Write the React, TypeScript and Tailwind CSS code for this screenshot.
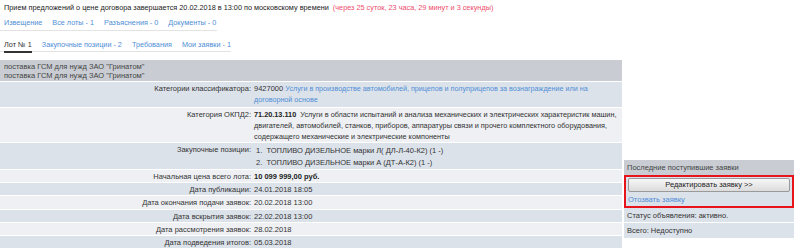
import React from "react";

function Row({ label, children, dark, cls = "" }: { label: string; children: React.ReactNode; dark?: boolean; cls?: string }) {
  return (
    <div className={`grid grid-cols-[252px_1fr] border-b border-white pt-[1px] ${dark ? "bg-[#dce2ea]" : "bg-[#eef0f3]"} ${cls}`}>
      <div className="text-right pr-[1px]">{label}</div>
      <div className="pl-[2px] pr-[2px]">{children}</div>
    </div>
  );
}

export default function App() {
  return (
    <div
      className="w-[800px] h-[249px] overflow-hidden bg-white text-[7.5px] leading-[11.25px] text-[#333]"
      style={{ fontFamily: '"Liberation Sans", Arial, sans-serif' }}
    >
      <div className="pl-[4px] pt-[2px] h-[15px] text-[7.3px] leading-[11px] text-[#222] whitespace-nowrap">
        Прием предложений о цене договора завершается 20.02.2018 в 13:00 по московскому времени{" "}
        <span className="text-[#ee4d6d] ml-[2px]">(через 25 суток, 23 часа, 29 минут и 3 секунды)</span>
      </div>

      <div className="flex w-[217px] gap-[10px] pl-[4px] h-[16px] items-center border-b border-[#e3e3e3] text-[7.25px] text-[#4f8ed6] whitespace-nowrap">
        <span>Извещение</span>
        <span>Все лоты - 1</span>
        <span>Разъяснения - 0</span>
        <span>Документы - 0</span>
      </div>

      <div className="flex w-[231px] gap-[10px] pl-[4px] mt-[6px] h-[15px] border-b border-[#e3e3e3] text-[7.25px] text-[#4f8ed6] whitespace-nowrap">
        <span className="text-[#333] border-b-2 border-[#333] h-[16px] pt-[2px]">Лот № 1</span>
        <span className="pt-[2px]">Закупочные позиции - 2</span>
        <span className="pt-[2px]">Требования</span>
        <span className="pt-[2px]">Мои заявки - 1</span>
      </div>

      <div className="flex mt-[8px] gap-[2px]">
        <div className="w-[622px] shrink-0">
          <div className="bg-[#c9cdd3] px-[4px] h-[22px] flex flex-col justify-center leading-[9px] border-b border-white text-[#444]">
            <div>поставка ГСМ для нужд ЗАО "Гринатом"</div>
            <div>поставка ГСМ для нужд ЗАО "Гринатом"</div>
          </div>
          <Row label="Категории классификатора:" dark cls="pb-[1px]">
            9427000{" "}
            <span className="text-[#4f8ed6] text-[7.2px]">
              Услуги в производстве автомобилей, прицепов и полуприцепов за вознаграждение или на договорной основе
            </span>
          </Row>
          <Row label="Категория ОКПД2:">
            <div className="text-[7.3px] pr-[1px]">
              <b className="text-[#222]">71.20.13.110</b>&nbsp; Услуги в области испытаний и анализа механических и
              электрических характеристик машин, двигателей, автомобилей, станков, приборов, аппаратуры связи и прочего
              комплектного оборудования, содержащего механические и электрические компоненты
            </div>
          </Row>
          <Row label="Закупочные позиции:" dark cls="pb-[1px]">
            <div className="pt-[1px]">
              <div>&nbsp;1.&nbsp; ТОПЛИВО ДИЗЕЛЬНОЕ марки Л( ДЛ-Л-40-К2) (1 -)</div>
              <div>&nbsp;2.&nbsp; ТОПЛИВО ДИЗЕЛЬНОЕ марки А (ДТ-А-К2) (1 -)</div>
            </div>
          </Row>
          <Row label="Начальная цена всего лота:">
            <b className="text-[#222]">10 099 999,00 руб.</b>
          </Row>
          <Row label="Дата публикации:" dark>24.01.2018 18:05</Row>
          <Row label="Дата окончания подачи заявок:">20.02.2018 13:00</Row>
          <Row label="Дата вскрытия заявок:" dark>22.02.2018 13:00</Row>
          <Row label="Дата рассмотрения заявок:">28.02.2018</Row>
          <Row label="Дата подведения итогов:" dark>05.03.2018</Row>
        </div>

        <div className="w-[170px] mt-[100px] shrink-0">
          <div className="bg-[#c9cdd3] px-[3px] h-[15px] flex items-center text-[#444]">Последние поступившие заявки</div>
          <div className="border-2 border-[#e8141b] bg-[#dce2ea] px-[2px] pt-[1px] pb-[1px]">
            <button className="w-full h-[14px] rounded-[2px] border border-[#9a9a9a] bg-gradient-to-b from-[#f7f7f7] to-[#dcdcdc] text-[7.5px] leading-[12px] text-[#222]">
              Редактировать заявку &gt;&gt;
            </button>
            <div className="text-[#4f8ed6] mt-[2px]">Отозвать заявку</div>
          </div>
          <div className="bg-[#dce2ea] px-[3px] h-[15px] flex items-center border-b border-white">Статус объявления: активно.</div>
          <div className="bg-[#dce2ea] px-[3px] h-[15px] flex items-center">Всего: Недоступно</div>
        </div>
      </div>
    </div>
  );
}
